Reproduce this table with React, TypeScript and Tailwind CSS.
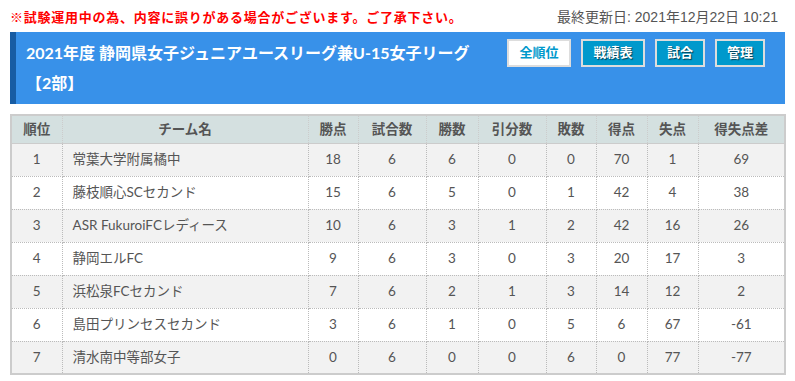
import React from 'react';

interface Row {
  rank: number;
  team: string;
  pts: number;
  played: number;
  won: number;
  drawn: number;
  lost: number;
  gf: number;
  ga: number;
  gd: number;
}

const rows: Row[] = [
  { rank: 1, team: '常葉大学附属橘中', pts: 18, played: 6, won: 6, drawn: 0, lost: 0, gf: 70, ga: 1, gd: 69 },
  { rank: 2, team: '藤枝順心SCセカンド', pts: 15, played: 6, won: 5, drawn: 0, lost: 1, gf: 42, ga: 4, gd: 38 },
  { rank: 3, team: 'ASR FukuroiFCレディース', pts: 10, played: 6, won: 3, drawn: 1, lost: 2, gf: 42, ga: 16, gd: 26 },
  { rank: 4, team: '静岡エルFC', pts: 9, played: 6, won: 3, drawn: 0, lost: 3, gf: 20, ga: 17, gd: 3 },
  { rank: 5, team: '浜松泉FCセカンド', pts: 7, played: 6, won: 2, drawn: 1, lost: 3, gf: 14, ga: 12, gd: 2 },
  { rank: 6, team: '島田プリンセスセカンド', pts: 3, played: 6, won: 1, drawn: 0, lost: 5, gf: 6, ga: 67, gd: -61 },
  { rank: 7, team: '清水南中等部女子', pts: 0, played: 6, won: 0, drawn: 0, lost: 6, gf: 0, ga: 77, gd: -77 },
];

const headers = ['順位', 'チーム名', '勝点', '試合数', '勝数', '引分数', '敗数', '得点', '失点', '得失点差'];
const widths = [51, 246, 50, 68, 52, 68, 50, 51, 51, 87];

const font = { fontFamily: '"Lato", "Noto Sans CJK JP", sans-serif' };

export default function App() {
  return (
    <div className="w-[795px] h-[381px] bg-white overflow-hidden" style={font}>
      {/* notice + last updated */}
      <div className="h-8 flex justify-between pt-[7px] pl-[10px] pr-[17px] leading-[20px]">
        <p
          className="text-[13px] font-bold text-[#ff0000] tracking-[0.75px]"
          style={{ fontFamily: '"Noto Sans CJK JP", sans-serif' }}
        >
          ※試験運用中の為、内容に誤りがある場合がございます。ご了承下さい。
        </p>
        <p
          className="text-[14px] text-[#555]"
          style={{ fontFamily: '"Liberation Sans", "Noto Sans CJK JP", sans-serif' }}
        >
          最終更新日: 2021年12月22日 10:21
        </p>
      </div>

      {/* league header */}
      <div className="mx-[10px] h-[72px] flex justify-between bg-[#3891e9] border-l-[6px] border-[#175ca3] pl-[10px] pr-[20px]">
        <h1 className="w-[465px] pt-[6px] text-[16px] leading-[30px] font-bold text-white">
          2021年度 静岡県女子ジュニアユースリーグ兼U-15女子リーグ【2部】
        </h1>
        <div className="flex gap-[10px] pt-[7px]">
          <a className="w-[64px] h-[28px] flex items-center justify-center bg-white border-2 border-[#ddd] text-[13px] font-bold text-[#0099cc]">
            全順位
          </a>
          {[
            { label: '戦績表', w: 'w-[64px]' },
            { label: '試合', w: 'w-[50px]' },
            { label: '管理', w: 'w-[50px]' },
          ].map((b) => (
            <a
              key={b.label}
              className={`${b.w} h-[28px] flex items-center justify-center bg-[#0099cc] border-2 border-[#ddd] text-[13px] font-bold text-white [text-shadow:1px_1px_1px_rgba(0,0,0,0.6)]`}
            >
              {b.label}
            </a>
          ))}
        </div>
      </div>

      {/* standings */}
      <div className="mx-[10px] mt-[10px]">
        <table className="w-[774px] table-fixed border-collapse border-2 border-[#ccc] text-[13.5px] text-[#555]">
          <colgroup>
            {widths.map((w, i) => (
              <col key={i} style={{ width: w }} />
            ))}
          </colgroup>
          <thead>
            <tr className="h-[28px] bg-[#d4e0e0]">
              {headers.map((h) => (
                <th
                  key={h}
                  className="font-bold text-center border-x border-dotted border-[#ccc] border-b p-0"
                  style={{ borderBottomStyle: 'solid' }}
                >
                  {h}
                </th>
              ))}
            </tr>
          </thead>
          <tbody>
            {rows.map((r) => (
              <tr key={r.rank} className={`h-[33px] ${r.rank % 2 === 1 ? 'bg-[#f2f2f2]' : 'bg-white'}`}>
                <td className="text-center border border-dotted border-[#bbb] p-0">{r.rank}</td>
                <td className="text-left pl-[10px] border border-dotted border-[#bbb]">{r.team}</td>
                {[r.pts, r.played, r.won, r.drawn, r.lost, r.gf, r.ga, r.gd].map((v, i) => (
                  <td key={i} className="text-center border border-dotted border-[#bbb] p-0">
                    {v}
                  </td>
                ))}
              </tr>
            ))}
          </tbody>
        </table>
      </div>
    </div>
  );
}
